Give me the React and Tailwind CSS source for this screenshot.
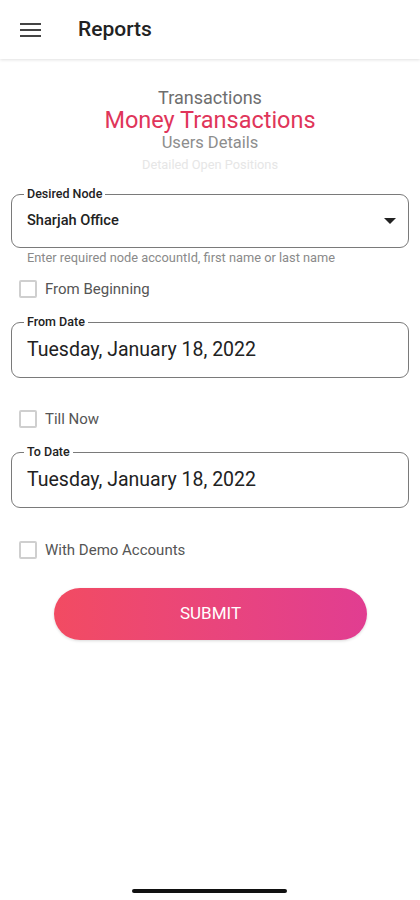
import React, { useState } from 'react';

const font = { fontFamily: 'Roboto, "Noto Sans", sans-serif' };

const Checkbox = ({ label, checked, onChange, className }) => (
    <label className={`flex items-center h-[18px] ml-[19px] cursor-pointer ${className}`}>
        <span
            onClick={onChange}
            className={`w-[18px] h-[18px] rounded-[2px] border-2 ${checked ? 'bg-[#e0355a] border-[#e0355a]' : 'border-[#cfcfcf] bg-white'}`}
        ></span>
        <span className="ml-[8px] text-[15px] leading-[18px] text-[#555]">{label}</span>
    </label>
);

const OutlinedField = ({ label, children, className }) => (
    <div className={`relative mx-[11px] border border-[#7a7a7a] rounded-[9px] ${className}`}>
        <span className="absolute left-[12px] -top-[9px] px-[3px] bg-white text-[12.5px] leading-[16px] font-medium text-[#222]">
            {label}
        </span>
        {children}
    </div>
);

export default function App() {
    const [fromBeginning, setFromBeginning] = useState(false);
    const [tillNow, setTillNow] = useState(false);
    const [demo, setDemo] = useState(false);

    return (
        <div className="w-[420px] h-[900px] bg-white relative overflow-hidden" style={font}>
            {/* Header */}
            <div className="h-[59px] flex items-center shadow-[0_1px_3px_rgba(0,0,0,0.12)]">
                <svg className="ml-[20px]" width="21" height="14" viewBox="0 0 21 14">
                    <rect x="0" y="0" width="21" height="2" fill="#444" />
                    <rect x="0" y="6" width="21" height="2" fill="#444" />
                    <rect x="0" y="12" width="21" height="2" fill="#444" />
                </svg>
                <span className="ml-[37px] text-[21px] font-medium text-[#222]">Reports</span>
            </div>

            {/* Titles */}
            <div className="flex flex-col items-center mt-[29px]">
                <div className="text-[18px] leading-[20px] text-[#6e6e6e]">Transactions</div>
                <div className="text-[23.5px] leading-[22px] text-[#e0355a] mt-px">Money Transactions</div>
                <div className="text-[16.5px] leading-[20px] text-[#8d8d8d] mt-[2px]">Users Details</div>
                <div className="text-[12.8px] leading-[14px] text-[#e6e6e6] mt-[5px]">Detailed Open Positions</div>
            </div>

            {/* Desired Node */}
            <OutlinedField label="Desired Node" className="mt-[22px] h-[54px] flex items-center">
                <span className="ml-[15px] text-[14.6px] font-medium text-[#222]">Sharjah Office</span>
                <svg className="ml-auto mr-[12px]" width="12" height="6" viewBox="0 0 12 6">
                    <path d="M0 0 L12 0 L6 6 Z" fill="#222" />
                </svg>
            </OutlinedField>
            <div className="ml-[27px] mt-[3px] text-[12.8px] leading-[14px] text-[#8a8a8a]">
                Enter required node accountId, first name or last name
            </div>

            <Checkbox label="From Beginning" checked={fromBeginning} onChange={() => setFromBeginning(!fromBeginning)} className="mt-[15px]" />

            <OutlinedField label="From Date" className="mt-[24px] h-[56px] flex items-center">
                <span className="ml-[15px] text-[19.5px] text-[#222]">Tuesday, January 18, 2022</span>
            </OutlinedField>

            <Checkbox label="Till Now" checked={tillNow} onChange={() => setTillNow(!tillNow)} className="mt-[32px]" />

            <OutlinedField label="To Date" className="mt-[24px] h-[56px] flex items-center">
                <span className="ml-[15px] text-[19.5px] text-[#222]">Tuesday, January 18, 2022</span>
            </OutlinedField>

            <Checkbox label="With Demo Accounts" checked={demo} onChange={() => setDemo(!demo)} className="mt-[33px]" />

            <button className="mt-[29px] ml-[54px] w-[313px] h-[52px] rounded-full bg-gradient-to-r from-[#f24b62] to-[#e13d91] text-white text-[17px] shadow-[0_1px_3px_rgba(0,0,0,0.15)]">
                SUBMIT
            </button>

            {/* Home indicator */}
            <div className="absolute left-[132px] top-[889px] w-[155px] h-[4px] rounded-full bg-[#111]"></div>
        </div>
    );
}
